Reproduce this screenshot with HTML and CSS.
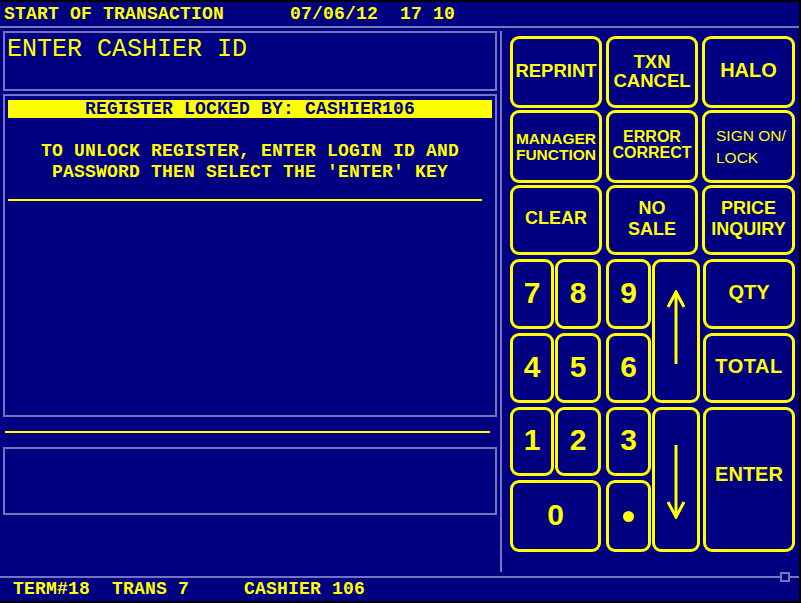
FILE: index.html
```html
<!DOCTYPE html>
<html>
<head>
<meta charset="utf-8">
<link rel="stylesheet" href="styles.css">
</head>
<body>
<div class="screen">
  <div class="header">START OF TRANSACTION      07/06/12  17 10</div>
  <div class="main">
    <div class="left">
      <div class="prompt">ENTER CASHIER ID</div>
      <div class="journal">
        <div class="banner">REGISTER LOCKED BY: CASHIER106</div>
        <div class="msg">TO UNLOCK REGISTER, ENTER LOGIN ID AND<br>PASSWORD THEN SELECT THE 'ENTER' KEY</div>
        <div class="rule"></div>
      </div>
      <div class="rule2"></div>
      <div class="entry"></div>
    </div>
    <div class="right">
      <div class="fkeys">
        <div class="key t-reprint">REPRINT</div>
        <div class="key t-two">TXN<br>CANCEL</div>
        <div class="key t-halo">HALO</div>
        <div class="key t-mgr">MANAGER<br>FUNCTION</div>
        <div class="key t-err">ERROR<br>CORRECT</div>
        <div class="key t-sign"><span class="sign">SIGN ON/<br>LOCK</span></div>
        <div class="key">CLEAR</div>
        <div class="key t-lines">NO<br>SALE</div>
        <div class="key t-lines">PRICE<br>INQUIRY</div>
      </div>
      <div class="keypad">
        <div class="key digit c1 r1">7</div>
        <div class="key digit c3 r1">8</div>
        <div class="key digit c5 r1">9</div>
        <div class="key c7 r12 arrow">
          <svg width="20" height="74" viewBox="0 0 20 74"><path d="M10 3 V74" stroke="#ff0" stroke-width="3" fill="none"/><path d="M2 17 L10 2 L18 17" stroke="#ff0" stroke-width="3" fill="none"/></svg>
        </div>
        <div class="key t-big c9 r1">QTY</div>
        <div class="key digit c1 r2">4</div>
        <div class="key digit c3 r2">5</div>
        <div class="key digit c5 r2">6</div>
        <div class="key t-big t-total c9 r2">TOTAL</div>
        <div class="key digit c1 r3">1</div>
        <div class="key digit c3 r3">2</div>
        <div class="key digit c5 r3">3</div>
        <div class="key c7 r34 arrow down">
          <svg width="20" height="74" viewBox="0 0 20 74"><path d="M10 0 V71" stroke="#ff0" stroke-width="3" fill="none"/><path d="M2 57 L10 72 L18 57" stroke="#ff0" stroke-width="3" fill="none"/></svg>
        </div>
        <div class="key t-big t-enter c9 r34">ENTER</div>
        <div class="key digit c13 r4">0</div>
        <div class="key c5 r4"><span class="dot"></span></div>
      </div>
    </div>
  </div>
  <div class="footer">TERM#18  TRANS 7     CASHIER 106</div>
  <div class="resize"></div>
</div>
</body>
</html>
```
FILE: styles.css
```css
* { box-sizing: border-box; }
body { margin: 0; background: #000; }

.screen {
  position: relative;
  width: 799px;
  height: 599px;
  margin-top: 2px;
  background: #000080;
  color: #ffff00;
  display: flex;
  flex-direction: column;
  font-family: "Liberation Mono", "Courier New", monospace;
  font-weight: bold;
  font-size: 18px;
  letter-spacing: 0.2px;
}

.header {
  height: 26px;
  border-bottom: 2px solid #7474c0;
  padding-left: 4px;
  line-height: 24px;
  white-space: pre;
}

.main {
  height: 550px;
  display: flex;
  border-bottom: 2px solid #7474c0;
}

.left {
  width: 500px;
  padding: 3px 0 0 3px;
}

.prompt {
  width: 494px;
  height: 60px;
  border: 2px solid #7474c0;
  padding: 3px 0 0 2px;
  font-weight: normal;
  font-size: 25px;
  line-height: 27px;
  letter-spacing: 0;
}

.journal {
  margin-top: 3px;
  width: 494px;
  height: 323px;
  border: 2px solid #7474c0;
  padding: 4px 3px 0 3px;
}

.banner {
  height: 18px;
  line-height: 18px;
  background: #ffff00;
  color: #000080;
  text-align: center;
}

.msg {
  margin-top: 23px;
  line-height: 21px;
  text-align: center;
}

.rule {
  margin-top: 16px;
  width: 474px;
  height: 2px;
  background: #ffff00;
}

.rule2 {
  margin: 14px 0 0 2px;
  width: 485px;
  height: 2px;
  background: #ffff00;
}

.entry {
  margin-top: 14px;
  width: 494px;
  height: 68px;
  border: 2px solid #7474c0;
}

.right {
  width: 299px;
  margin: 3px 0 4px;
  border-left: 2px solid #7474c0;
  padding: 5px 0 0 8px;
}

.fkeys {
  display: grid;
  grid-template-columns: 92px 92px 93px;
  grid-template-rows: 72px 73px 70px;
  column-gap: 4px;
  row-gap: 2px;
}

.keypad {
  margin-top: 4px;
  display: grid;
  grid-template-columns: 44px 1px 46px 5px 45px 1px 48px 3px 92px;
  grid-template-rows: 70px 70px 69px 72px;
  row-gap: 4px;
}

.key {
  border: 3px solid #ffff00;
  border-radius: 9px;
  display: flex;
  align-items: center;
  justify-content: center;
  text-align: center;
  padding-bottom: 3px;
  font-family: "Liberation Sans", Arial, sans-serif;
  font-weight: bold;
  font-size: 18px;
  letter-spacing: 0;
  line-height: 19px;
}

.t-reprint { font-size: 18.5px; }
.t-two { font-size: 18.5px; line-height: 19px; }
.t-halo { font-size: 20px; }
.t-mgr { font-size: 15.5px; line-height: 16px; padding-bottom: 0; }
.t-err { font-size: 16px; line-height: 16px; padding-bottom: 4px; }
.t-sign { justify-content: flex-start; padding: 0 0 0 11px; font-size: 15.5px; font-weight: normal; line-height: 22px; }
.sign { text-align: left; }
.t-lines { line-height: 21px; }
.t-big { font-size: 20px; }
.t-total { letter-spacing: 0.5px; }
.t-enter { padding-bottom: 10px; }

.digit { font-size: 30px; line-height: 30px; }

.c1 { grid-column: 1; }
.c3 { grid-column: 3; }
.c5 { grid-column: 5; }
.c7 { grid-column: 7; }
.c9 { grid-column: 9; }
.c13 { grid-column: 1 / 4; }
.r1 { grid-row: 1; }
.r2 { grid-row: 2; }
.r3 { grid-row: 3; }
.r4 { grid-row: 4; }
.r12 { grid-row: 1 / 3; }
.r34 { grid-row: 3 / 5; }

.arrow { padding: 0 0 8px 0; }
.arrow.down { padding: 4px 0 0 0; }
.arrow svg { display: block; }

.dot {
  width: 11px;
  height: 11px;
  border-radius: 50%;
  background: #ffff00;
  margin-top: 3px;
}

.footer {
  height: 23px;
  line-height: 23px;
  padding-left: 13px;
  white-space: pre;
}

.resize {
  position: absolute;
  left: 780px;
  top: 570px;
  width: 10px;
  height: 10px;
  border: 2px solid #7474c0;
  background: #000080;
}
```
